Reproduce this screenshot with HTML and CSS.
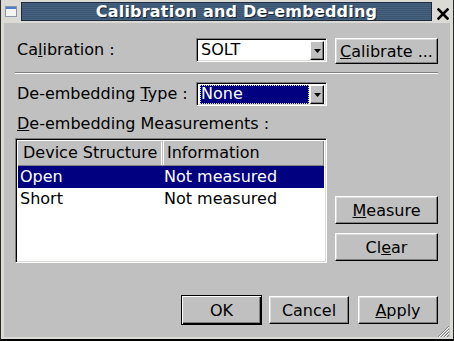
FILE: index.html
```html
<!DOCTYPE html>
<html>
<head>
<meta charset="utf-8">
<link rel="stylesheet" href="styles.css">
</head>
<body>
<div class="window">
  <div class="titlebar">
    <svg class="appicon" width="12" height="11" viewBox="0 0 12 11">
      <rect x="0.5" y="0.5" width="11" height="10" fill="#f4f4f0" stroke="#8a96a8"/>
      <rect x="1" y="1" width="10" height="2" fill="#4f7fc8"/>
    </svg>
    <div class="titlefill"><span class="titletext">Calibration and De-embedding</span></div>
    <svg class="closebtn" width="12" height="12" viewBox="0 0 12 12">
      <path d="M1.5 1.5 L10.5 10.5 M10.5 1.5 L1.5 10.5" stroke="#000" stroke-width="2.6" stroke-linecap="square"/>
    </svg>
  </div>
  <div class="content">
    <div class="row">
      <span class="label">Ca<u>l</u>ibration :</span>
      <div class="combo">
        <span class="value">SOLT</span>
        <span class="arrow"><svg width="7" height="4" viewBox="0 0 7 4"><path d="M0 0H7L3.5 4Z" fill="#000"/></svg></span>
      </div>
      <button class="btn calib"><u>C</u>alibrate ...</button>
    </div>
    <div class="sep"></div>
    <div class="row row2">
      <span class="label">De-embedding <u>T</u>ype :</span>
      <div class="combo focused">
        <span class="value sel">None</span>
        <span class="arrow"><svg width="7" height="4" viewBox="0 0 7 4"><path d="M0 0H7L3.5 4Z" fill="#000"/></svg></span>
      </div>
    </div>
    <div class="caption"><u>D</u>e-embedding Measurements :</div>
    <div class="listrow">
      <div class="list">
        <div class="hdr">
          <div class="hc c1">Device Structure</div>
          <div class="hc c2">Information</div>
        </div>
        <div class="tr selrow"><span class="c1">Open</span><span class="c2">Not measured</span></div>
        <div class="tr"><span class="c1">Short</span><span class="c2">Not measured</span></div>
      </div>
      <div class="side">
        <button class="btn side-btn"><u>M</u>easure</button>
        <button class="btn side-btn">Cl<u>e</u>ar</button>
      </div>
    </div>
    <div class="bottom">
      <button class="btn ok">OK</button>
      <button class="btn cancel">Cancel</button>
      <button class="btn apply"><u>A</u>pply</button>
    </div>
  </div>
  <svg class="grip" width="13" height="12" viewBox="0 0 13 12">
    <path d="M12 1 L1 12 M12 4 L4 12 M12 7 L7 12 M12 10 L10 12" stroke="#808080" stroke-width="1"/>
    <path d="M12 2 L2 12 M12 5 L5 12 M12 8 L8 12" stroke="#ffffff" stroke-width="1"/>
  </svg>
</div>
</body>
</html>
```
FILE: styles.css
```css
* { box-sizing: border-box; }
html, body { margin: 0; padding: 0; }
body {
  width: 454px;
  height: 341px;
  overflow: hidden;
  font-family: "DejaVu Sans", sans-serif;
  font-size: 16px;
  color: #000;
}
.window {
  position: relative;
  width: 454px;
  height: 341px;
  background: #dcdad5;
  border-left: 1px solid #2a2a2a;
  border-right: 1px solid #2a2a2a;
  border-bottom: 2px solid #000;
  padding: 0 3px 2px 3px;
  display: flex;
  flex-direction: column;
}
.titlebar {
  height: 23px;
  margin: 0 -3px;
  display: flex;
  align-items: flex-start;
  padding-top: 2px;
}
.appicon { margin: 4px 0 0 4px; flex: none; }
.titlefill {
  margin-left: 4px;
  width: 411px;
  height: 19px;
  border: 1px solid #1d2c3d;
  background: repeating-linear-gradient(to bottom, #46627f 0 1px, #3a5572 1px 2px);
  display: flex;
  align-items: center;
  justify-content: center;
  padding-left: 20px;
}
.titletext {
  color: #fff;
  font-weight: bold;
  font-size: 16px;
  letter-spacing: 0.2px;
  line-height: 17px;
  text-shadow: 1px 1px 0 #1a2533;
}
.closebtn { margin: 6px 0 0 5px; flex: none; }
.content {
  flex: 1;
  background: #c0c0c0;
  padding: 15px 12px 0 11px;
  display: flex;
  flex-direction: column;
}
.row {
  display: flex;
  align-items: flex-start;
  height: 26px;
}
.row2 { height: 24px; margin-top: 8px; }
.label {
  width: 181px;
  padding-left: 2px;
  line-height: 24px;
  white-space: nowrap;
}
.combo {
  width: 131px;
  height: 24px;
  background: #fff;
  border: 1px solid;
  border-color: #808080 #fff #fff #808080;
  box-shadow: inset 1px 1px #000, inset -1px -1px #dcdad5;
  display: flex;
  align-items: center;
  padding: 2px 2px 2px 4px;
}
.value { flex: 1; line-height: 18px; }
.value.sel {
  background: #000080;
  color: #fff;
  margin-left: -1px;
  margin-right: 1px;
  padding-left: 1px;
  height: 19px;
  outline: 1px dotted #e0e0a0;
  outline-offset: -1px;
}
.arrow {
  width: 14px;
  height: 19px;
  background: #c0c0c0;
  border: 1px solid;
  border-color: #fff #000 #000 #fff;
  box-shadow: inset -1px -1px #808080;
  display: flex;
  align-items: center;
  justify-content: center;
  flex: none;
}
.arrow svg { margin-top: 1px; }
.btn {
  font-family: "DejaVu Sans", sans-serif;
  font-size: 16px;
  color: #000;
  background: #c0c0c0;
  border: 1px solid;
  border-color: #fff #000 #000 #fff;
  box-shadow: inset -1px -1px #808080, inset 1px 1px #dcdcdc;
  padding: 0;
  margin: 0;
  text-align: center;
  white-space: nowrap;
}
.calib {
  margin-left: 8px;
  width: 103px;
  height: 26px;
}
.sep {
  margin-top: 8px;
  height: 2px;
  border-top: 1px solid #808080;
  border-bottom: 1px solid #fff;
}
.caption {
  margin-top: 8px;
  padding-left: 2px;
  line-height: 19px;
  white-space: nowrap;
}
.listrow {
  margin-top: 5px;
  display: flex;
  height: 125px;
}
.list {
  width: 312px;
  height: 125px;
  background: #fff;
  border: 1px solid;
  border-color: #808080 #fff #fff #808080;
  box-shadow: inset 1px 1px #000, inset -1px -1px #dcdad5;
  padding: 2px;
}
.hdr {
  display: flex;
  height: 25px;
  background: #c0c0c0;
}
.hc {
  height: 25px;
  line-height: 24px;
  border-right: 1px solid #808080;
  border-bottom: 1px solid #808080;
  box-shadow: inset 1px 1px #fff;
  white-space: nowrap;
}
.hdr .c1 { width: 145px; padding-left: 5px; box-shadow: inset 1px 1px #c0c0c0, inset -1px 0 #fff; border-right-color: #c0c0c0; }
.hdr .c2 { flex: 1; padding-left: 4px; box-shadow: inset 1px 0 #fff; }
.tr {
  display: flex;
  height: 22px;
  line-height: 22px;
  white-space: nowrap;
}
.tr .c1 { width: 145px; padding-left: 2px; }
.tr .c2 { flex: 1; padding-left: 1px; }
.selrow { background: #000080; color: #fff; }
.side {
  margin-left: 8px;
  width: 103px;
  display: flex;
  flex-direction: column;
  justify-content: flex-end;
  gap: 9px;
  padding-bottom: 2px;
}
.side-btn { width: 103px; height: 28px; }
.bottom {
  margin-top: 32px;
  display: flex;
  justify-content: flex-end;
  align-items: center;
}
.ok {
  width: 81px;
  height: 30px;
  border: 1px solid #000;
  box-shadow: inset 1px 1px #fff, inset -1px -1px #000, inset -2px -2px #808080;
}
.cancel { margin-left: 7px; width: 80px; height: 28px; }
.apply { margin-left: 9px; width: 80px; height: 28px; }
.grip {
  position: absolute;
  right: 3px;
  bottom: 2px;
}
```
